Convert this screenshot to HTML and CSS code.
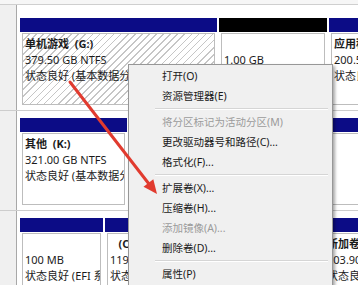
FILE: index.html
```html
<!DOCTYPE html>
<html lang="zh-CN">
<head>
  <meta charset="UTF-8" />
  <meta name="viewport" content="width=device-width, initial-scale=1" />
  <title>磁盘管理</title>
  <link rel="stylesheet" href="styles.css">
</head>
<body>
  <div class="screen">
    <div class="top"></div>

    <!-- disk 1 -->
    <div class="disk disk-first">
      <div class="disk-label"></div>
      <div class="parts">
        <div class="part w197">
          <div class="bar"></div>
          <div class="box hatch">
            <b>单机游戏  (G:)</b>
            <span>379.50 GB NTFS</span>
            <span>状态良好 (基本数据分区)</span>
          </div>
        </div>
        <div class="part w108">
          <div class="bar black"></div>
          <div class="box">
            <b></b>
            <span>1.00 GB</span>
            <span>未分配</span>
          </div>
        </div>
        <div class="part w60">
          <div class="bar"></div>
          <div class="box">
            <b>应用程序  (F:)</b>
            <span>200.50 GB NTFS</span>
            <span>状态良好 (基本数据分区)</span>
          </div>
        </div>
      </div>
    </div>

    <!-- disk 2 -->
    <div class="disk">
      <div class="disk-label"></div>
      <div class="parts">
        <div class="part w107">
          <div class="bar"></div>
          <div class="box">
            <b>其他  (K:)</b>
            <span>321.00 GB NTFS</span>
            <span>状态良好 (基本数据分区)</span>
          </div>
        </div>
        <div class="part w240">
          <div class="bar"></div>
          <div class="box"></div>
        </div>
      </div>
    </div>

    <!-- disk 3 -->
    <div class="disk">
      <div class="disk-label"></div>
      <div class="parts">
        <div class="part w83">
          <div class="bar"></div>
          <div class="box">
            <b></b>
            <span>100 MB</span>
            <span>状态良好 (EFI 系统分区)</span>
          </div>
        </div>
        <div class="part w215">
          <div class="bar"></div>
          <div class="box">
            <b>   (C:)</b>
            <span>119.24 GB</span>
            <span>状态良好</span>
          </div>
        </div>
        <div class="part w60">
          <div class="bar"></div>
          <div class="box">
            <b>新加卷  (D:)</b>
            <span>203.90 GB NTFS</span>
            <span>状态良好 (基本数据分区)</span>
          </div>
        </div>
      </div>
    </div>

    <!-- context menu -->
    <div class="menu">
      <div class="item">打开(O)</div>
      <div class="item">资源管理器(E)</div>
      <div class="sep"></div>
      <div class="item off">将分区标记为活动分区(M)</div>
      <div class="item">更改驱动器号和路径(C)...</div>
      <div class="item">格式化(F)...</div>
      <div class="sep"></div>
      <div class="item">扩展卷(X)...</div>
      <div class="item">压缩卷(H)...</div>
      <div class="item off">添加镜像(A)...</div>
      <div class="item">删除卷(D)...</div>
      <div class="sep"></div>
      <div class="item">属性(P)</div>
    </div>

    <!-- red pointer arrow -->
    <svg class="arrow" width="358" height="285" viewBox="0 0 358 285">
      <line x1="70" y1="82" x2="149" y2="184" stroke="#e13b2f" stroke-width="3" stroke-linecap="round" />
      <polygon points="157,194 143.5,186.8 153.3,179.2" fill="#e13b2f" />
    </svg>
  </div>
</body>
</html>
```

FILE: styles.css
```css
/* Disk management view */
body {
  margin: 0;
  font-family: 'Noto Sans', 'Noto Sans CJK SC', sans-serif;
  font-size: 11px;
  color: #1b1b1b;
}

.screen {
  position: relative;
  width: 358px;
  height: 285px;
  overflow: hidden;
  background: #fff;
}

.top {
  height: 4px;
  background: #f6f6f6;
  border-bottom: 1px solid #cfcfcf;
}

.disk {
  display: flex;
  height: 100px;
  box-sizing: border-box;
  border-bottom: 1px solid #cdcdcd;
}

.disk-first {
  height: 106px;
}

.disk-label {
  width: 16px;
  flex-shrink: 0;
  background: #f0f0f0;
  border-right: 1px solid #a8a8a8;
}

.parts {
  display: flex;
  gap: 2px;
  padding: 7px 0 0 3px;
  background: #fff;
  flex: 1;
  min-width: 0;
}

.disk-first .parts {
  padding-top: 13px;
}

.part {
  display: flex;
  flex-direction: column;
  flex-shrink: 0;
}

.w60 { width: 60px; }
.w83 { width: 83px; }
.w107 { width: 107px; }
.w108 { width: 108px; }
.w197 { width: 197px; }
.w215 { width: 215px; }
.w240 { width: 240px; }

.bar {
  height: 14px;
  background: #0c0c86;
}

.bar.black {
  background: #000;
}

.box {
  height: 72px;
  box-sizing: border-box;
  margin: 1px 2px 0;
  padding: 2px 2px 0;
  border: 1px solid #bdbdbd;
  background: #fff;
  overflow: hidden;
  display: flex;
  flex-direction: column;
}

.box b,
.box span {
  display: block;
  height: 16px;
  line-height: 16px;
  white-space: pre;
}

.box b {
  font-weight: 700;
}

/* selected partition hatch */
.hatch {
  background: repeating-linear-gradient(135deg, #fff 0 3.8px, #c6c6c6 3.8px 5px);
}

/* right click menu */
.menu {
  position: absolute;
  left: 128px;
  top: 64px;
  width: 205px;
  box-sizing: border-box;
  padding: 1px 2px 2px;
  background: #f0f0f0;
  border: 1px solid #979797;
  box-shadow: 2px 2px 3px rgba(0,0,0,0.35);
  font-size: 10.5px;
}

.item {
  height: 20px;
  line-height: 20px;
  padding-left: 31px;
  color: #1a1a1a;
  white-space: nowrap;
}

.item.off {
  color: #9b9b9b;
}

.sep {
  height: 1px;
  margin: 2px 2px 2px 24px;
  background: #d5d5d5;
  border-bottom: 1px solid #fff;
}

.arrow {
  position: absolute;
  left: 0;
  top: 0;
  pointer-events: none;
}
```
